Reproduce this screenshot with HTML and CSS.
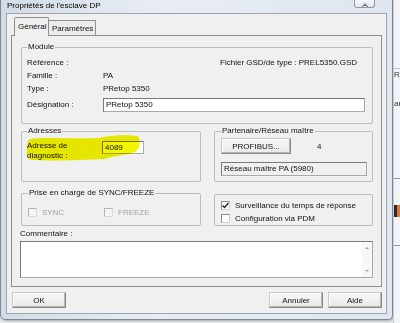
FILE: index.html
```html
<!DOCTYPE html>
<html lang="fr">
<head>
    <meta charset="UTF-8">
    <title>Propriétés de l'esclave DP</title>
    <link rel="stylesheet" href="styles.css">
</head>
<body>
    <div class="desk">
        <div class="window">
            <div class="titlebar">
                <span class="title">Propriétés de l'esclave DP</span>
                <span class="close">
                    <svg width="8" height="6" viewBox="0 0 8 6"><path d="M1 6 L4 2.5 L7 6 M2.5 4.5 H5.5" stroke="#6a6a6a" stroke-width="1" fill="none"/></svg>
                </span>
            </div>

            <div class="client">
                <div class="tabs">
                    <div class="tab active">Général</div>
                    <div class="tab">Paramètres</div>
                </div>

                <div class="pane">
                    <fieldset class="group module">
                        <legend>Module</legend>
                        <div class="module-grid">
                            <span>Référence :</span><span></span><span class="gsd">Fichier GSD/de type : PREL5350.GSD</span>
                            <span>Famille :</span><span>PA</span><span></span>
                            <span>Type :</span><span>PRetop 5350</span><span></span>
                            <span class="desig">Désignation :</span><div class="edit desig-edit">PRetop 5350</div>
                        </div>
                    </fieldset>

                    <div class="row addr-row">
                        <fieldset class="group addr">
                            <legend>Adresses</legend>
                            <div class="addr-line">
                                <span class="addr-label">Adresse de<br>diagnostic :</span>
                                <div class="edit addr-edit">4089</div>
                            </div>
                            <!-- yellow marker stroke over the field -->
                            <svg class="marker" width="120" height="36" viewBox="0 0 120 36">
                                <path d="M4 14 C5 11 12 11 30 11 C55 11 75 12 80 10 C90 8 105 8 113 9 C116 10 116 14 115 19 C114 24 111 26 104 27 C98 28 92 29 80 32 C60 33 30 34 8 33 C4 33 2 30 3 24 C3 20 3 16 4 14 Z" fill="#f4f400"/>
                            </svg>
                        </fieldset>

                        <fieldset class="group partner">
                            <legend>Partenaire/Réseau maître</legend>
                            <div class="partner-top">
                                <div class="btn profibus">PROFIBUS...</div>
                                <span class="station">4</span>
                            </div>
                            <div class="edit readonly">Réseau maître PA (5980)</div>
                        </fieldset>
                    </div>

                    <div class="row sync-row">
                        <fieldset class="group sync">
                            <legend>Prise en charge de SYNC/FREEZE</legend>
                            <div class="sync-line">
                                <label class="check disabled"><span class="box"></span>SYNC</label>
                                <label class="check disabled freeze"><span class="box"></span>FREEZE</label>
                            </div>
                        </fieldset>

                        <fieldset class="group options">
                            <label class="check"><span class="box"><svg width="7" height="7" viewBox="0 0 7 7"><path d="M0.5 3.5 L2.5 5.5 L6.5 1" stroke="#222" stroke-width="1.4" fill="none"/></svg></span>Surveillance du temps de réponse</label>
                            <label class="check"><span class="box"></span>Configuration via PDM</label>
                        </fieldset>
                    </div>

                    <div class="comment-label">Commentaire :</div>
                    <div class="comment">
                        <div class="scroll">
                            <span class="arrow up"></span>
                            <span class="arrow down"></span>
                        </div>
                    </div>
                </div>

                <div class="buttons">
                    <div class="btn">OK</div>
                    <div class="spacer"></div>
                    <div class="btn">Annuler</div>
                    <div class="btn">Aide</div>
                </div>
            </div>
        </div>

        <div class="behind">
            <span class="peek rh">RH</span>
            <span class="peek ary">ary</span>
            <span class="peek line l1"></span>
            <span class="peek icon"></span>
            <span class="peek line l2"></span>
        </div>
    </div>
</body>
</html>
```

FILE: styles.css
```css
body {
    margin: 0;
    width: 400px;
    height: 323px;
    overflow: hidden;
    background: #e4e8ec;
    font-family: "Liberation Sans", Arial, sans-serif;
    font-size: 8px;
    color: #111;
}

.desk {
    display: flex;
    height: 323px;
}

.window {
    width: 393px;
    height: 320px;
    box-sizing: border-box;
    flex-shrink: 0;
    display: flex;
    flex-direction: column;
    padding: 0 5px 5px 5px;
    background: linear-gradient(90deg, #d3dce6, #e8edf3 40%, #dfe6ee);
    border: 1px solid #7b8897;
    border-top: none;
    border-radius: 0 0 5px 5px;
    box-shadow: 1px 1px 2px rgba(0, 0, 0, 0.25);
}

.titlebar {
    height: 13px;
    display: flex;
    align-items: flex-start;
}

.title {
    margin-left: 1px;
    line-height: 12px;
    color: #000;
}

.close {
    margin-left: auto;
    margin-right: 12px;
    width: 21px;
    height: 8px;
    box-sizing: border-box;
    border: 1px solid #8f9aa6;
    border-top: none;
    border-radius: 0 0 3px 3px;
    background: linear-gradient(#f6f8fa, #e2e7ec);
    display: flex;
    justify-content: center;
    align-items: flex-end;
}

.close svg {
    display: block;
}

.client {
    flex: 1;
    display: flex;
    flex-direction: column;
    background: #f0f0f0;
    border: 1px solid #9aa6b3;
    padding: 0 4px 4px 4px;
}

.tabs {
    display: flex;
    align-items: flex-end;
    padding: 3px 0 0 3px;
    margin-bottom: -1px;
}

.tab {
    height: 16px;
    line-height: 15px;
    padding: 0 3px;
    box-sizing: border-box;
    border: 1px solid #8e8f8f;
    border-bottom: none;
    border-left: none;
    background: #ececec;
    width: 47px;
}

.tab.active {
    position: relative;
    z-index: 1;
    width: 35px;
    height: 19px;
    line-height: 18px;
    border-left: 1px solid #8e8f8f;
    background: #f0f0f0;
    border-radius: 2px 2px 0 0;
}

.pane {
    border: 1px solid #8e8f8f;
    padding: 6px 8px 8px 9px;
    display: flex;
    flex-direction: column;
}

.group {
    margin: 0;
    min-width: 0;
    box-sizing: border-box;
    border: 1px solid #bdbdbd;
    border-radius: 2px;
}

.group legend {
    padding: 0 1px;
    line-height: 10px;
}

.module {
    height: 82px;
    padding: 4px 7px 0 5px;
}

.module-grid {
    display: grid;
    grid-template-columns: 76px 1fr auto;
    grid-auto-rows: 13px;
    line-height: 13px;
}

.gsd {
    margin-right: 8px;
}

.desig {
    margin-top: 3px;
    line-height: 14px;
}

.desig-edit {
    grid-column: 2 / 4;
    margin-top: 3px;
}

.edit {
    height: 14px;
    box-sizing: border-box;
    background: #fff;
    border: 1px solid #a9a9a9;
    border-top-color: #7a7a7a;
    border-left-color: #7a7a7a;
    line-height: 12px;
    padding-left: 2px;
}

.row {
    display: flex;
    justify-content: space-between;
}

.addr-row {
    margin-top: 2px;
}

.addr {
    position: relative;
    width: 180px;
    height: 56px;
    padding: 5px 5px 0 5px;
}

.addr-line {
    display: flex;
    align-items: flex-start;
}

.addr-label {
    width: 75px;
    line-height: 10px;
    margin-top: 0;
}

.addr-edit {
    width: 42px;
    height: 13px;
}

.marker {
    position: absolute;
    left: 2px;
    top: -9px;
    mix-blend-mode: multiply;
}

.partner {
    width: 159px;
    height: 56px;
    padding: 2px 5px 0 6px;
}

.partner-top {
    display: flex;
    align-items: center;
}

.btn {
    height: 16px;
    box-sizing: border-box;
    border: 1px solid #8a8a8a;
    border-top-color: #c9c9c9;
    border-left-color: #c9c9c9;
    background: linear-gradient(#f7f7f7, #e9e9e9);
    box-shadow: inset -1px -1px 0 #b4b4b4, inset 1px 1px 0 #fff;
    display: flex;
    align-items: center;
    justify-content: center;
}

.profibus {
    width: 70px;
}

.station {
    margin-left: 26px;
}

.readonly {
    margin-top: 8px;
    background: #f0f0f0;
    height: 14px;
}

.sync-row {
    margin-top: 6px;
    align-items: flex-end;
}

.sync {
    width: 180px;
    height: 38px;
    padding: 8px 5px 0 6px;
}

.sync-line {
    display: flex;
}

.options {
    width: 159px;
    height: 32px;
    padding: 4px 5px 0 6px;
    display: flex;
    flex-direction: column;
}

.check {
    display: flex;
    align-items: center;
    height: 13px;
}

.box {
    width: 9px;
    height: 9px;
    box-sizing: border-box;
    margin-right: 5px;
    background: #fff;
    border: 1px solid #8c8c8c;
    border-right-color: #d0d0d0;
    border-bottom-color: #d0d0d0;
    display: flex;
    align-items: center;
    justify-content: center;
}

.check.disabled {
    color: #a3a3a3;
    width: 76px;
}

.check.disabled .box {
    background: #f4f4f4;
    border-color: #b5b5b5 #dadada #dadada #b5b5b5;
}

.comment-label {
    margin-top: 3px;
    line-height: 10px;
    margin-left: -1px;
}

.comment {
    margin-top: 2px;
    height: 37px;
    box-sizing: border-box;
    background: #fff;
    border: 1px solid #a9a9a9;
    border-top-color: #7a7a7a;
    border-left-color: #7a7a7a;
    display: flex;
    justify-content: flex-end;
    margin-left: -1px;
}

.scroll {
    width: 10px;
    background: #f7f7f7;
    display: flex;
    flex-direction: column;
    justify-content: space-between;
    align-items: center;
    padding: 5px 0;
}

.arrow {
    width: 0;
    height: 0;
    border-left: 2px solid transparent;
    border-right: 2px solid transparent;
}

.arrow.up {
    border-bottom: 2px solid #a0a0a0;
}

.arrow.down {
    border-top: 2px solid #a0a0a0;
}

.buttons {
    margin-top: 5px;
    display: flex;
    gap: 5px;
    padding-left: 1px;
}

.buttons .btn {
    width: 54px;
}

.spacer {
    flex: 1;
}

.behind {
    flex: 1;
    background: #f3f4f5;
    border-left: 1px solid #c5ccd4;
    display: flex;
    flex-direction: column;
    overflow: hidden;
}

.peek {
    display: block;
    white-space: nowrap;
}

.rh {
    margin-top: 68px;
    border-top: 1px solid #b8c4d0;
    color: #333;
    line-height: 12px;
}

.ary {
    margin-top: 18px;
    color: #333;
}

.line {
    height: 1px;
    background: #8a96a3;
}

.l1 {
    margin-top: 70px;
}

.icon {
    margin-top: 26px;
    height: 12px;
    background: linear-gradient(90deg, #2a2a2a 50%, #e07a3a 50%);
}

.l2 {
    margin-top: 28px;
}
```
